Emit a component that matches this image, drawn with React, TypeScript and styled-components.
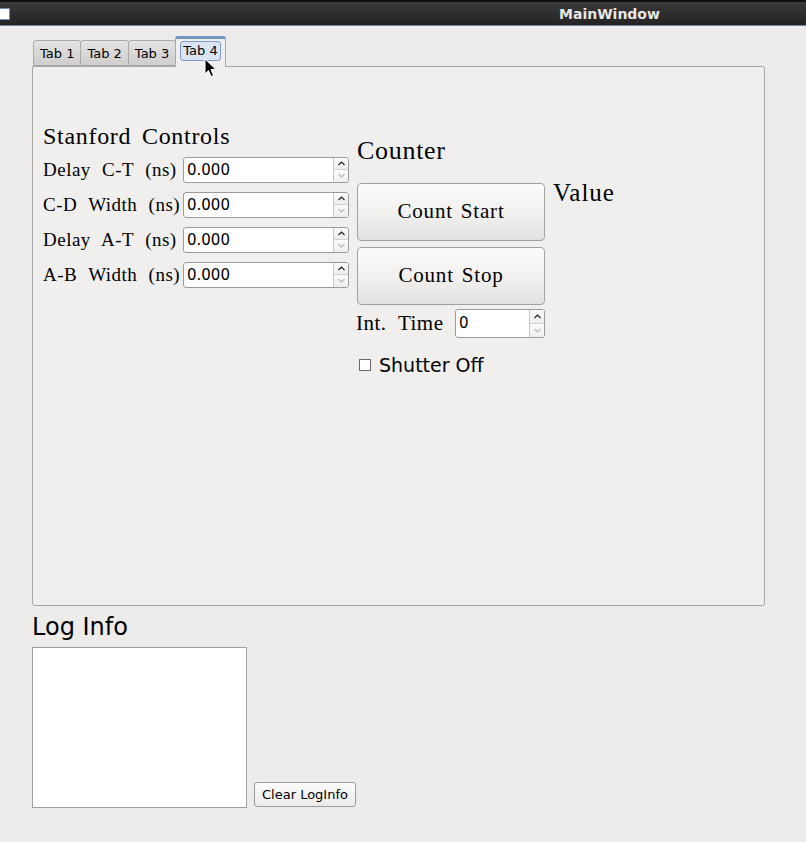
import React from 'react';
import styled, { createGlobalStyle } from 'styled-components';

const SERIF = '"Liberation Serif", "DejaVu Serif", serif';
const SANS = '"DejaVu Sans", "Liberation Sans", sans-serif';

const GlobalStyle = createGlobalStyle`
  html, body {
    margin: 0;
    padding: 0;
    background: #edeceb;
    overflow: hidden;
  }
  body {
    width: 806px;
    height: 842px;
  }
`;

const Window = styled.div`
  position: relative;
  width: 806px;
  height: 842px;
  background: #edeceb;
  font-family: ${SANS};
  color: #000;
`;

const TitleBar = styled.div`
  height: 23px;
  border-top: 2px solid #0e0e0e;
  border-bottom: 1px solid #6f84a3;
  background: linear-gradient(#3a3a3a, #232323);
  display: flex;
  align-items: center;
`;

const WindowIcon = styled.div`
  width: 9px;
  height: 10px;
  background: #fff;
  border: 1px solid #6d8bbd;
  border-left: none;
`;

const Title = styled.div`
  margin-left: 549px;
  font-weight: bold;
  font-size: 14px;
  color: #e8e8e8;
`;

const Body = styled.div`
  padding: 10px 0 0 32px;
`;

const TabBar = styled.div`
  display: flex;
  align-items: flex-end;
  height: 30px;
  padding-left: 1px;
`;

const Tab = styled.div<{ $active?: boolean }>`
  box-sizing: border-box;
  height: ${(p) => (p.$active ? 31 : 26)}px;
  padding: ${(p) => (p.$active ? '2px 4px 0' : '0 6px')};
  margin-bottom: ${(p) => (p.$active ? -1 : 0)}px;
  border: 1px solid #a9a9a8;
  border-bottom: ${(p) => (p.$active ? 'none' : '1px solid #a9a9a8')};
  border-top: ${(p) => (p.$active ? '3px solid #7592c2' : '1px solid #a9a9a8')};
  border-radius: 3px 3px 0 0;
  margin-right: -1px;
  background: ${(p) => (p.$active ? '#f0efee' : 'linear-gradient(#e4e3e2, #cfcecd)')};
  font-size: 13px;
  display: flex;
  align-items: ${(p) => (p.$active ? 'flex-start' : 'center')};
  position: relative;
  z-index: ${(p) => (p.$active ? 2 : 1)};
`;

const TabFocus = styled.div`
  padding: 1px 2px 2px;
  border: 1px solid #7f9ccb;
  border-radius: 3px;
  background: #dbe4f2;
`;

const Pane = styled.div`
  box-sizing: border-box;
  width: 733px;
  height: 540px;
  border: 1px solid #a7a6a5;
  border-radius: 0 3px 3px 3px;
  background: #f0efee;
  padding: 56px 0 0 10px;
  display: flex;
  align-items: flex-start;
  gap: 8px;
`;

const Column = styled.div`
  display: flex;
  flex-direction: column;
`;

const Heading = styled.div<{ $size: number }>`
  font-family: ${SERIF};
  font-size: ${(p) => p.$size}px;
  letter-spacing: 0.7px;
  word-spacing: 4px;
  line-height: 1.15;
  white-space: nowrap;
`;

const FieldRows = styled.div`
  display: flex;
  flex-direction: column;
  gap: 9px;
  margin-top: 6px;
`;

const FieldRow = styled.div`
  display: flex;
  align-items: center;
  justify-content: space-between;
  width: 306px;
`;

const Label = styled.span<{ $size?: number }>`
  font-family: ${SERIF};
  font-size: ${(p) => p.$size ?? 19}px;
  letter-spacing: 0.5px;
  word-spacing: 6px;
  white-space: nowrap;
`;

const Spin = styled.div<{ $w: number; $h: number }>`
  box-sizing: border-box;
  width: ${(p) => p.$w}px;
  height: ${(p) => p.$h}px;
  border: 1px solid #9c9b9a;
  border-radius: 3px;
  background: #fff;
  display: flex;
  overflow: hidden;
`;

const SpinValue = styled.div`
  flex: 1;
  font-size: 15px;
  padding-left: 3px;
  display: flex;
  align-items: center;
`;

const SpinButtons = styled.div`
  width: 14px;
  display: flex;
  flex-direction: column;
  border-left: 1px solid #c7c6c5;
`;

const SpinArrow = styled.div<{ $disabled?: boolean }>`
  flex: 1;
  display: flex;
  align-items: center;
  justify-content: center;
  background: linear-gradient(#fbfbfb, #eeeeed);
  & + & {
    border-top: 1px solid #d3d2d1;
  }
  svg {
    stroke: ${(p) => (p.$disabled ? '#b8b8b8' : '#222')};
  }
`;

const CounterWrap = styled.div`
  display: flex;
  align-items: flex-start;
  gap: 8px;
  margin-top: 13px;
`;

const Buttons = styled.div`
  display: flex;
  flex-direction: column;
  gap: 6px;
  margin-top: 17px;
`;

const BigButton = styled.div`
  box-sizing: border-box;
  width: 188px;
  height: 58px;
  border: 1px solid #a2a1a0;
  border-radius: 4px;
  background: linear-gradient(#fbfbfa, #f1f0ef 55%, #e2e1e0);
  font-family: ${SERIF};
  font-size: 21px;
  letter-spacing: 0.8px;
  word-spacing: 2px;
  display: flex;
  align-items: center;
  justify-content: center;
`;

const ValueLabel = styled.div`
  font-family: ${SERIF};
  font-size: 25px;
  letter-spacing: 1px;
  margin-top: 43px;
`;

const IntRow = styled.div`
  display: flex;
  align-items: center;
  justify-content: space-between;
  width: 189px;
  margin: 4px 0 0 -1px;
`;

const CheckRow = styled.div`
  display: flex;
  align-items: center;
  gap: 8px;
  margin: 16px 0 0 2px;
  font-size: 19px;
`;

const CheckBox = styled.div`
  box-sizing: border-box;
  width: 12px;
  height: 12px;
  border: 1px solid #6a6a6a;
  background: #fff;
`;

const LogTitle = styled.div`
  font-size: 24px;
  margin-top: 6px;
  line-height: 30px;
`;

const LogRow = styled.div`
  display: flex;
  align-items: flex-end;
  gap: 7px;
  margin-top: 5px;
`;

const LogBox = styled.div`
  box-sizing: border-box;
  width: 215px;
  height: 161px;
  border: 1px solid #a09f9e;
  background: #fff;
`;

const SmallButton = styled.div`
  box-sizing: border-box;
  height: 25px;
  padding: 0 7px;
  margin-bottom: 1px;
  border: 1px solid #9d9c9b;
  border-radius: 3px;
  background: linear-gradient(#fcfcfc, #ecebea);
  font-size: 13px;
  display: flex;
  align-items: center;
`;

const Cursor = styled.svg`
  position: absolute;
  left: 204px;
  top: 58px;
  z-index: 10;
`;

const Up = () => (
  <svg width="7" height="5" viewBox="0 0 7 5" fill="none" strokeWidth="1.2">
    <path d="M0.5 4 L3.5 1 L6.5 4" />
  </svg>
);

const Down = () => (
  <svg width="7" height="5" viewBox="0 0 7 5" fill="none" strokeWidth="1.2">
    <path d="M0.5 1 L3.5 4 L6.5 1" />
  </svg>
);

const SpinBox: React.FC<{ value: string; w: number; h: number }> = ({ value, w, h }) => (
  <Spin $w={w} $h={h}>
    <SpinValue>{value}</SpinValue>
    <SpinButtons>
      <SpinArrow><Up /></SpinArrow>
      <SpinArrow $disabled><Down /></SpinArrow>
    </SpinButtons>
  </Spin>
);

const fields = ['Delay C-T (ns)', 'C-D Width (ns)', 'Delay A-T (ns)', 'A-B Width (ns)'];

export default function App() {
  return (
    <Window>
      <GlobalStyle />
      <TitleBar>
        <WindowIcon />
        <Title>MainWindow</Title>
      </TitleBar>
      <Body>
        <TabBar>
          <Tab>Tab 1</Tab>
          <Tab>Tab 2</Tab>
          <Tab>Tab 3</Tab>
          <Tab $active>
            <TabFocus>Tab 4</TabFocus>
          </Tab>
        </TabBar>
        <Pane>
          <Column>
            <Heading $size={24}>Stanford Controls</Heading>
            <FieldRows>
              {fields.map((f) => (
                <FieldRow key={f}>
                  <Label>{f}</Label>
                  <SpinBox value="0.000" w={166} h={26} />
                </FieldRow>
              ))}
            </FieldRows>
          </Column>
          <CounterWrap>
            <Column>
              <Heading $size={26}>Counter</Heading>
              <Buttons>
                <BigButton>Count Start</BigButton>
                <BigButton>Count Stop</BigButton>
              </Buttons>
              <IntRow>
                <Label $size={21}>Int. Time</Label>
                <SpinBox value="0" w={90} h={29} />
              </IntRow>
              <CheckRow>
                <CheckBox />
                Shutter Off
              </CheckRow>
            </Column>
            <ValueLabel>Value</ValueLabel>
          </CounterWrap>
        </Pane>
        <LogTitle>Log Info</LogTitle>
        <LogRow>
          <LogBox />
          <SmallButton>Clear LogInfo</SmallButton>
        </LogRow>
      </Body>
      <Cursor width="13" height="20" viewBox="0 0 13 20">
        <path d="M1 1 L1 16 L4.5 12.5 L7 18.5 L9.5 17.5 L7 11.5 L12 11.5 Z" fill="#000" stroke="#fff" strokeWidth="1" />
      </Cursor>
    </Window>
  );
}
